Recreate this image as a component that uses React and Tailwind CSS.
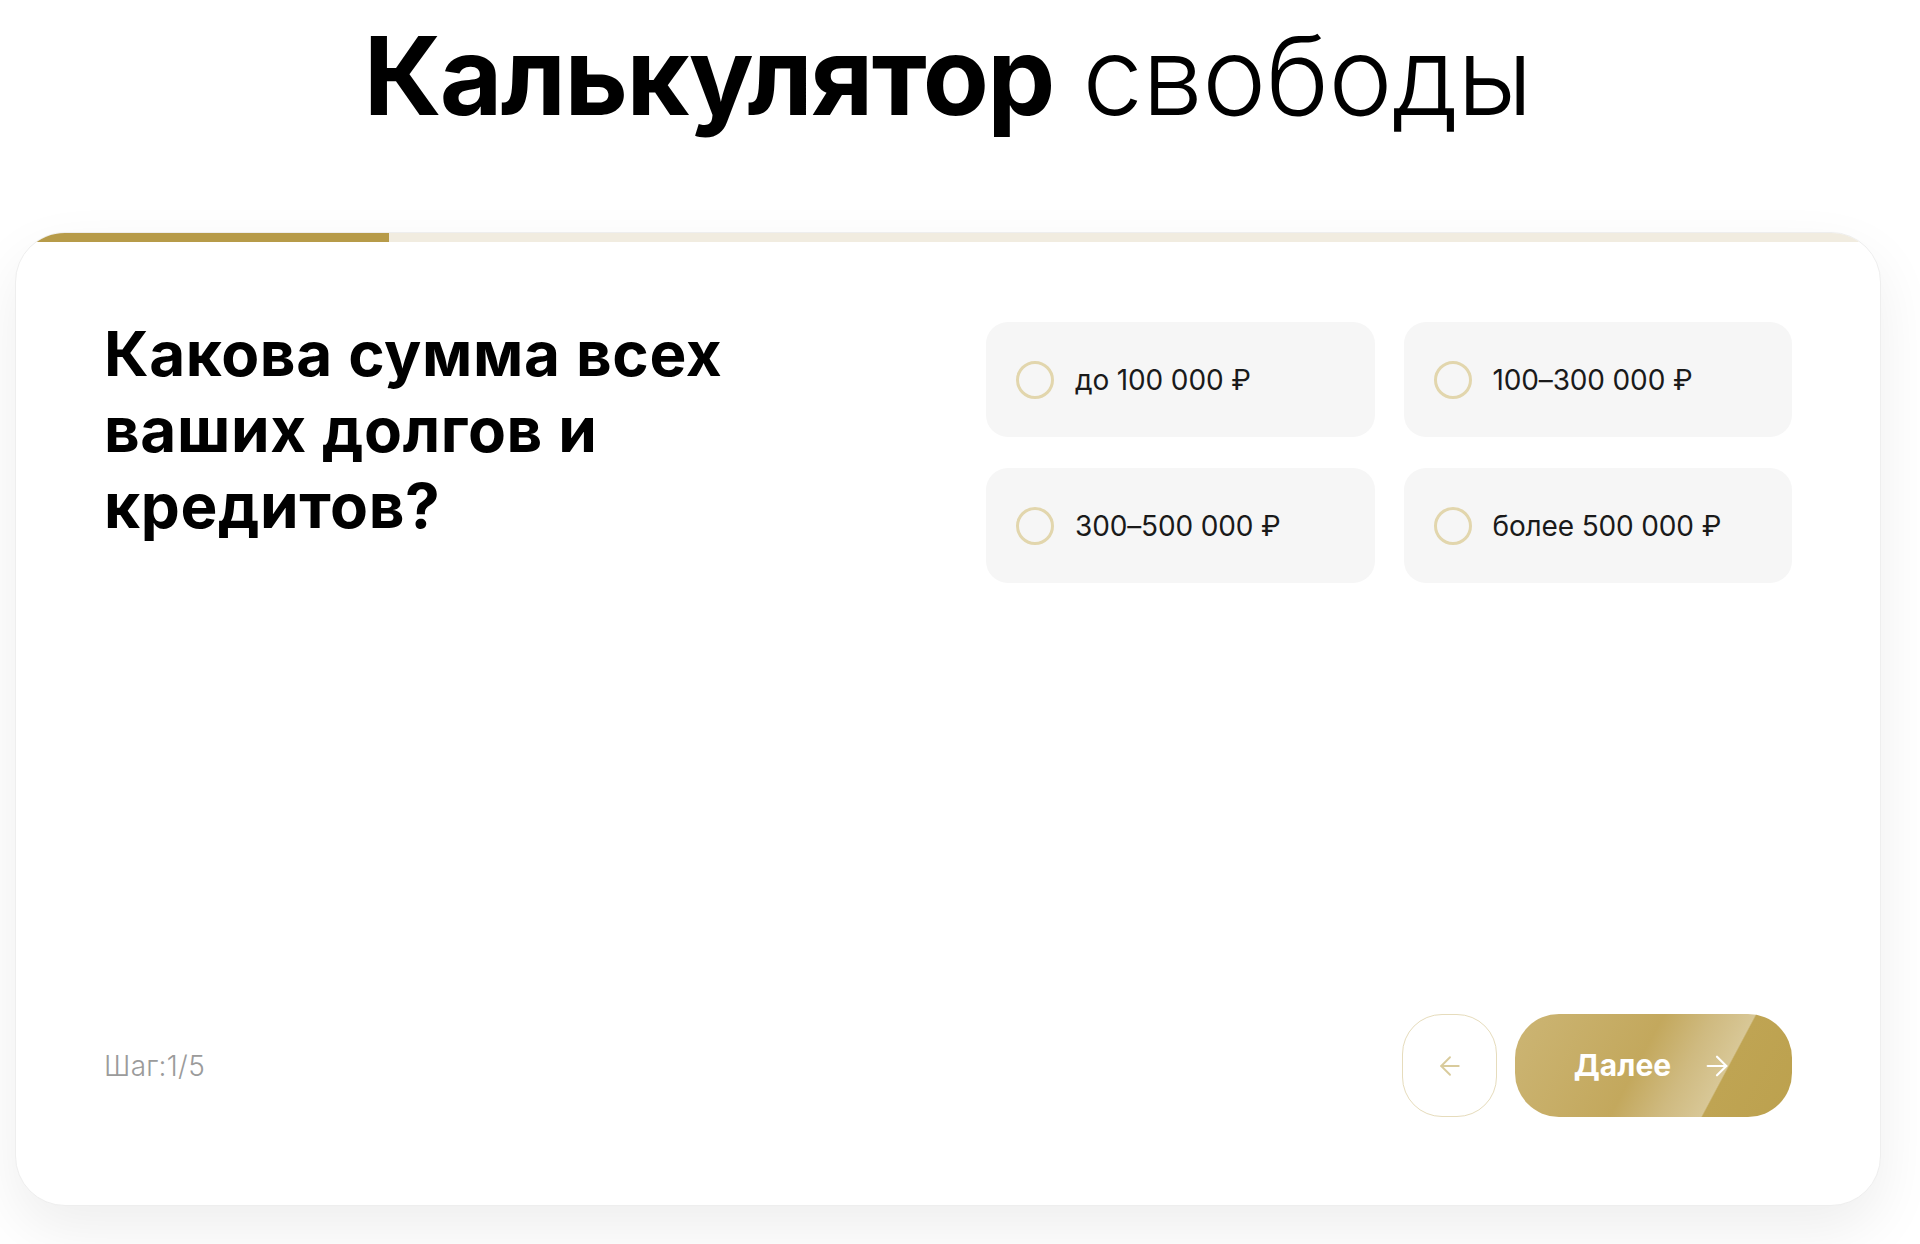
import React from 'react';
import { ArrowLeft, ArrowRight } from 'lucide-react';

const options = ['до 100 000 ₽', '100–300 000 ₽', '300–500 000 ₽', 'более 500 000 ₽'];

export default function App() {
  const step = 1;
  const total = 5;

  return (
    <div className="min-h-[1244px] bg-white text-black font-['Inter','Noto_Sans',sans-serif] overflow-hidden">
      <div className="ml-[15px] w-[1866px]">
        <h1 className="pt-[22px] text-center text-[108px] leading-none tracking-[-0.015em]">
          <span className="font-bold">Калькулятор</span>{' '}
          <span className="font-light tracking-[-0.005em]">свободы</span>
        </h1>

        <div className="mt-[102px] h-[974px] flex flex-col rounded-[50px] bg-white border border-[#eeeeee] overflow-hidden shadow-[0_24px_60px_rgba(0,0,0,0.07)]">
          {/* progress */}
          <div className="h-[9px] w-full bg-[#f1ece0] shrink-0">
            <div className="h-full bg-[#b79b49]" style={{ width: `${(step / total) * 100}%` }} />
          </div>

          <div className="flex-1 flex flex-col px-[88px] pt-[80px] pb-[88px]">
            <div className="flex justify-between items-start">
              <h2 className="-mt-[6px] max-w-[720px] text-[62px] leading-[76px] font-bold tracking-[0.01em]">
                Какова сумма всех ваших долгов и кредитов?
              </h2>

              <div className="w-[806px] grid grid-cols-2 gap-x-[29px] gap-y-[31px]">
                {options.map((opt) => (
                  <button
                    key={opt}
                    className="h-[115px] rounded-[22px] bg-[#f6f6f6] flex items-center gap-[21px] pl-[30px] text-left"
                  >
                    <span className="w-[38px] h-[38px] rounded-full border-[3.5px] border-[#e2d6ad] shrink-0" />
                    <span className="text-[28px] text-[#1a1a1a] tracking-[-0.005em]">{opt}</span>
                  </button>
                ))}
              </div>
            </div>

            <div className="mt-auto flex items-center justify-between">
              <span className="text-[28px] font-light text-[#9b9b9b] tracking-[0.01em]">
                Шаг:{step}/{total}
              </span>

              <div className="flex items-center gap-[18px]">
                <button className="w-[95px] h-[103px] rounded-[40px] border-[1.5px] border-[#e6dcbc] flex items-center justify-center text-[#d9cb9c]">
                  <ArrowLeft size={30} strokeWidth={1.5} />
                </button>
                <button className="w-[277px] h-[103px] rounded-[44px] flex items-center justify-center gap-[30px] text-white bg-[linear-gradient(118deg,#ccb574_0%,#c3a85d_45%,#cfba80_60%,#d8c796_72.5%,#bfa453_73%,#bca14e_100%)]">
                  <span className="text-[30px] font-bold">Далее</span>
                  <ArrowRight size={32} strokeWidth={1.6} />
                </button>
              </div>
            </div>
          </div>
        </div>
      </div>
    </div>
  );
}
